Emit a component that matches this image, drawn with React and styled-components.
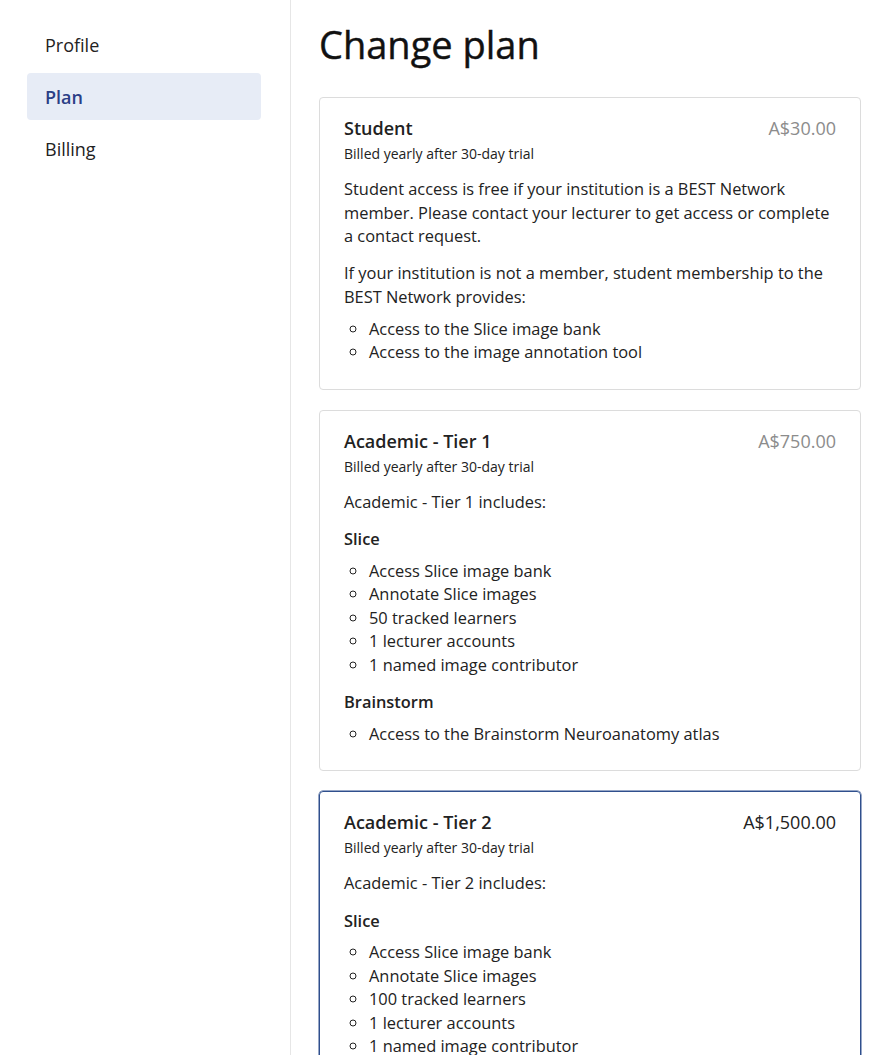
import React from 'react';
import styled, { createGlobalStyle } from 'styled-components';

const GlobalStyle = createGlobalStyle`
  html, body {
    margin: 0;
    padding: 0;
    background: #fff;
  }
  body {
    font-family: "Open Sans", "Noto Sans", "Liberation Sans", sans-serif;
    color: #222;
  }
`;

const plans = [
  {
    id: 'student',
    name: 'Student',
    price: 'A$30.00',
    intro: [
      'Student access is free if your institution is a BEST Network member. Please contact your lecturer to get access or complete a contact request.',
      'If your institution is not a member, student membership to the BEST Network provides:',
    ],
    sections: [
      { items: ['Access to the Slice image bank', 'Access to the image annotation tool'] },
    ],
  },
  {
    id: 'tier1',
    name: 'Academic - Tier 1',
    price: 'A$750.00',
    intro: ['Academic - Tier 1 includes:'],
    sections: [
      {
        title: 'Slice',
        items: [
          'Access Slice image bank',
          'Annotate Slice images',
          '50 tracked learners',
          '1 lecturer accounts',
          '1 named image contributor',
        ],
      },
      { title: 'Brainstorm', items: ['Access to the Brainstorm Neuroanatomy atlas'] },
    ],
  },
  {
    id: 'tier2',
    name: 'Academic - Tier 2',
    price: 'A$1,500.00',
    selected: true,
    intro: ['Academic - Tier 2 includes:'],
    sections: [
      {
        title: 'Slice',
        items: [
          'Access Slice image bank',
          'Annotate Slice images',
          '100 tracked learners',
          '1 lecturer accounts',
          '1 named image contributor',
        ],
      },
      { title: 'Brainstorm', items: ['Access to the Brainstorm Neuroanatomy atlas'] },
    ],
  },
];

const navItems = ['Profile', 'Plan', 'Billing'];

const App = () => {
  return (
    <>
      <GlobalStyle />
      <Page>
        <Sidebar>
          {navItems.map((item) => (
            <NavItem key={item} $active={item === 'Plan'}>
              {item}
            </NavItem>
          ))}
        </Sidebar>
        <Main>
          <Heading>Change plan</Heading>
          <PlanList>
            {plans.map((plan) => (
              <PlanCard key={plan.id} $selected={plan.selected}>
                <CardHeader>
                  <PlanName>{plan.name}</PlanName>
                  <Price $selected={plan.selected}>{plan.price}</Price>
                </CardHeader>
                <Billed>Billed yearly after 30-day trial</Billed>
                {plan.intro.map((text, i) => (
                  <Paragraph key={i}>{text}</Paragraph>
                ))}
                {plan.sections.map((section, i) => (
                  <Section key={i}>
                    {section.title && <SectionTitle>{section.title}</SectionTitle>}
                    <FeatureList $untitled={!section.title}>
                      {section.items.map((item) => (
                        <li key={item}>{item}</li>
                      ))}
                    </FeatureList>
                  </Section>
                ))}
              </PlanCard>
            ))}
          </PlanList>
        </Main>
      </Page>
    </>
  );
};

export default App;

const Page = styled.div`
  display: flex;
  height: 1055px;
  overflow: hidden;
`;

const Sidebar = styled.nav`
  flex: 0 0 291px;
  box-sizing: border-box;
  border-right: 1px solid #e6e6e6;
  padding: 21px 29px 0 27px;
  display: flex;
  flex-direction: column;
  gap: 5px;
`;

const NavItem = styled.div`
  height: 47px;
  display: flex;
  align-items: center;
  padding-left: 18px;
  border-radius: 4px;
  font-size: 18px;
  color: ${(p) => (p.$active ? '#2b3f86' : '#222')};
  font-weight: ${(p) => (p.$active ? 600 : 400)};
  background-color: ${(p) => (p.$active ? '#e7ecf6' : 'transparent')};
  cursor: pointer;
`;

const Main = styled.main`
  flex: 1;
  padding: 0 21px 0 28px;
`;

const Heading = styled.h1`
  margin: 18px 0 27px;
  font-size: 38px;
  font-weight: 400;
  line-height: 52px;
  color: #111;
  -webkit-text-stroke: 0.4px #111;
`;

const PlanList = styled.div`
  display: flex;
  flex-direction: column;
  gap: 20px;
`;

const PlanCard = styled.div`
  border: 1px solid ${(p) => (p.$selected ? '#2f4f8d' : '#dcdcdc')};
  box-shadow: ${(p) => (p.$selected ? '0 0 0 0.5px #2f4f8d' : 'none')};
  border-radius: 4px;
  padding: 17px 24px 25px;
`;

const CardHeader = styled.div`
  display: flex;
  justify-content: space-between;
  align-items: baseline;
`;

const PlanName = styled.div`
  font-size: 18px;
  font-weight: 600;
  line-height: 26px;
  color: #222;
`;

const Price = styled.div`
  font-size: 18px;
  line-height: 26px;
  color: ${(p) => (p.$selected ? '#222' : '#8c8c8c')};
`;

const Billed = styled.div`
  font-size: 14px;
  line-height: 20px;
  color: #222;
  margin: 3px 0 13px;
`;

const Paragraph = styled.p`
  margin: 0;
  font-size: 16.4px;
  line-height: 23.5px;

  & + & {
    margin-top: 13.5px;
  }
`;

const Section = styled.div``;

const SectionTitle = styled.div`
  font-size: 16.4px;
  font-weight: 600;
  line-height: 23.5px;
  margin: 14px 0 8px;
`;

const FeatureList = styled.ul`
  margin: ${(p) => (p.$untitled ? '8.5px 0 0' : '0')};
  padding-left: 25px;
  list-style: circle;
  font-size: 16.4px;
  line-height: 23.5px;
`;
